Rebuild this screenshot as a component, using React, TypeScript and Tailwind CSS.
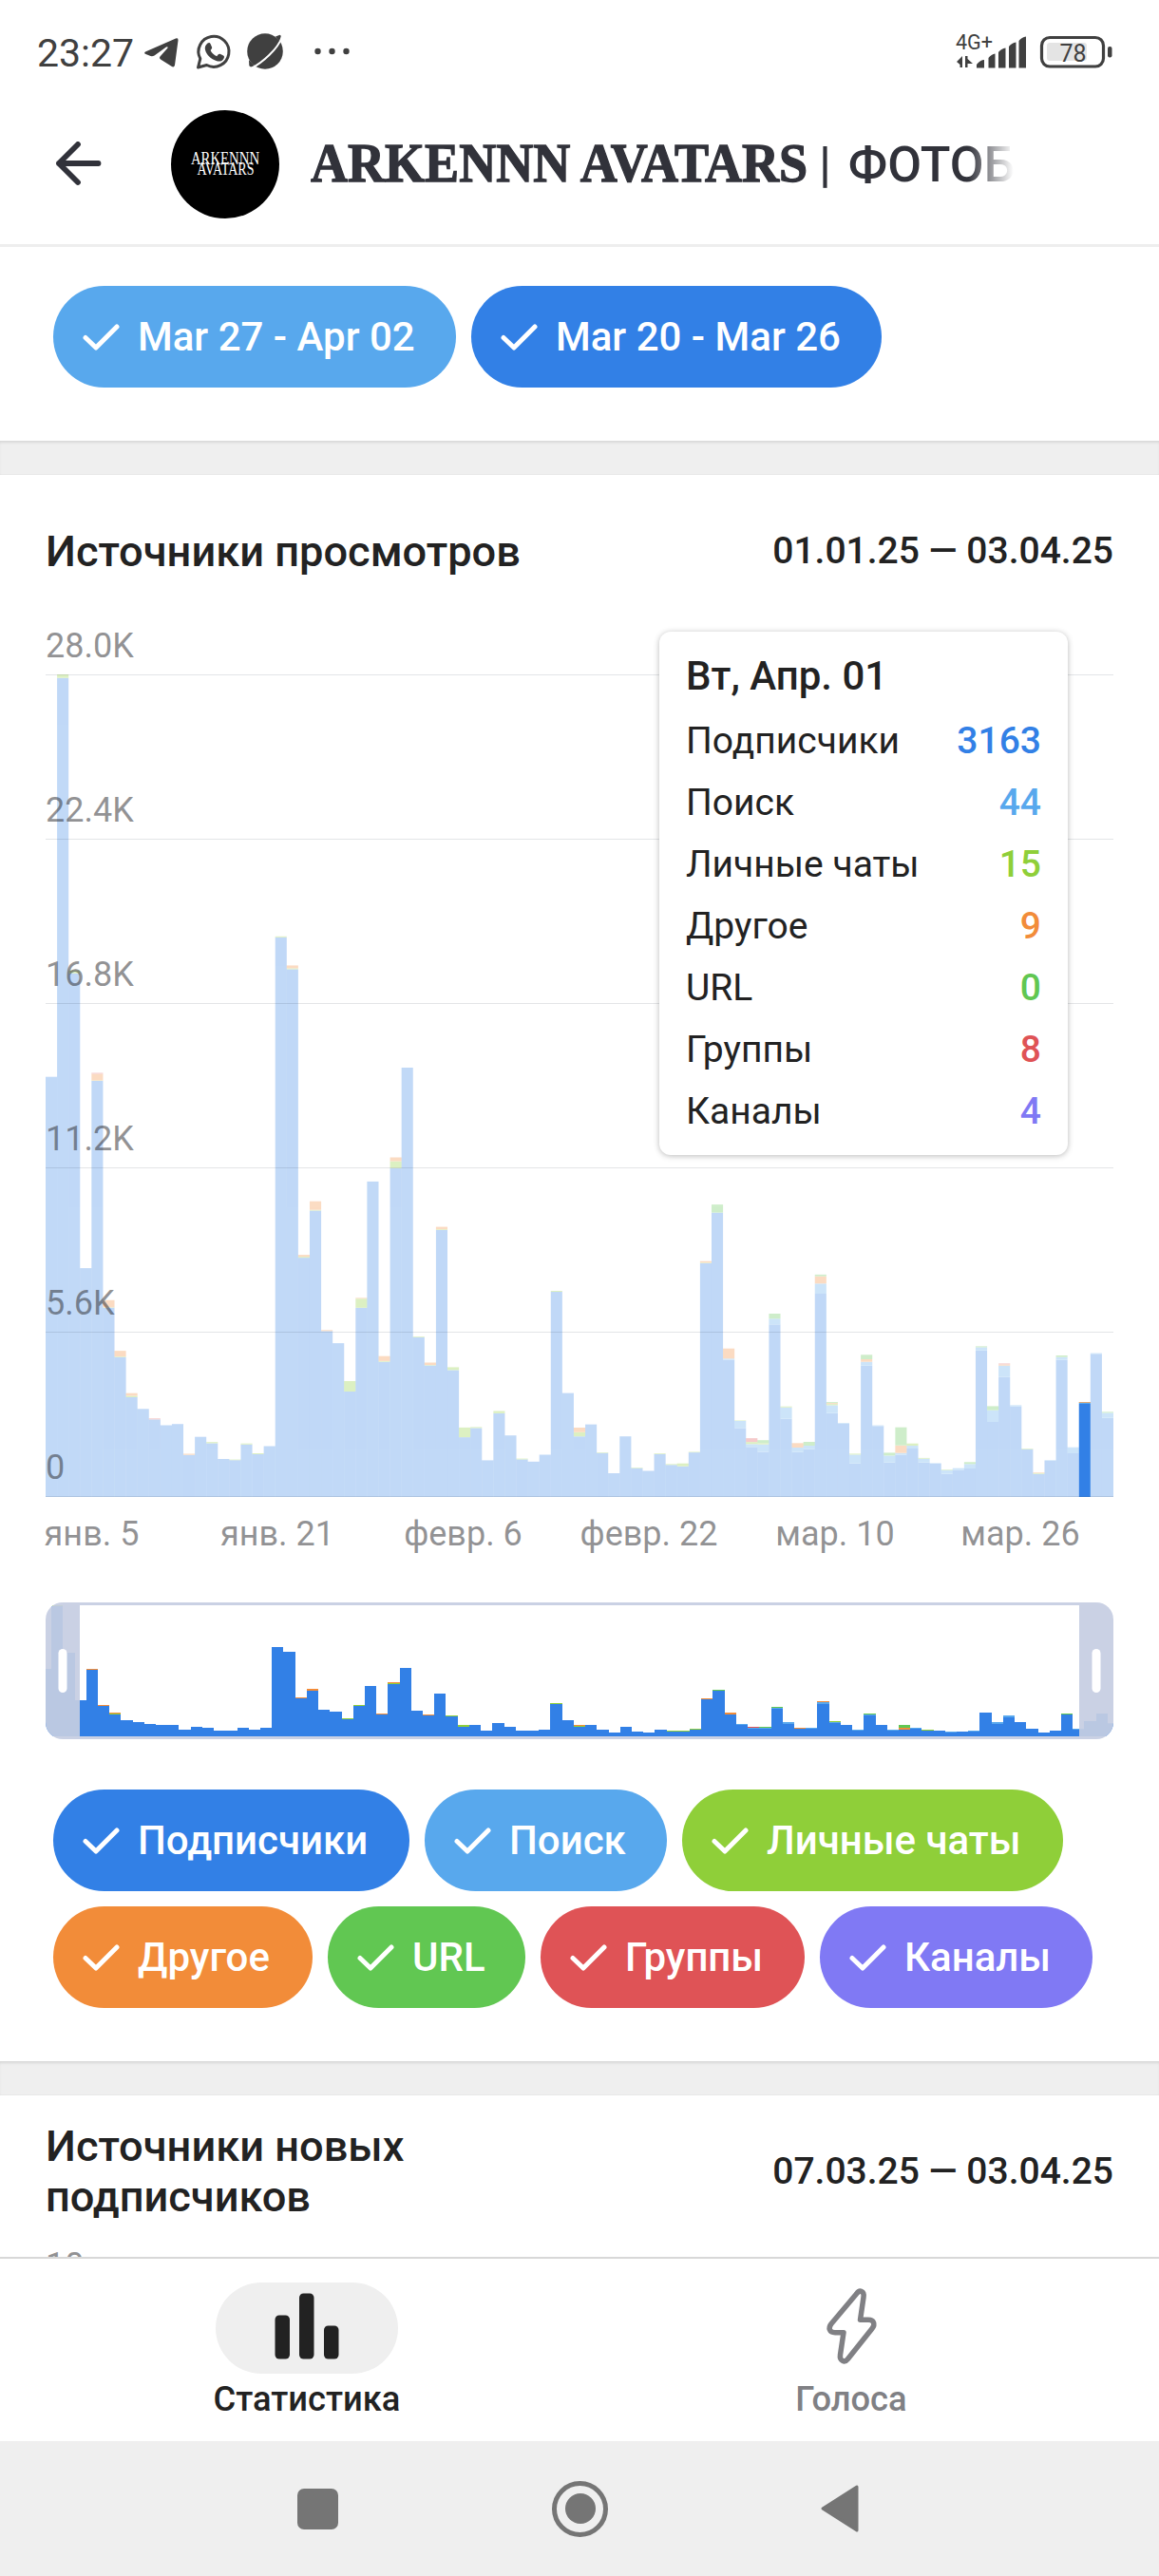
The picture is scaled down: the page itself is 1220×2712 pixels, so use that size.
import type { ReactNode } from "react";

const SERIES = ["#3280e6", "#58a8ed", "#8fcf39", "#f28c39", "#61c752", "#df5356"];

// Daily stack heights: [subscribers, search, private chats, other, url, groups]
const DAYS: number[][] = [
  [442.3], [862.3, 0, 3.7], [551.3, 0, 3], [240.9], [438, 0, 0.5, 7, 0, 1],
  [199.2, 0, 0.5, 7.5], [147.2, 0, 0.7, 6], [105, 0, 1.5, 2.8], [92.7], [81.7, 0, 0, 0, 0, 1],
  [75.5], [76.8], [44.3, 0, 0, 1.2], [63.3], [56.6, 0, 1.2],
  [40], [38.8, 0, 0.6], [55.3, 0, 1], [45, 0, 1], [53.5],
  [589.2, 0, 1], [555.6, 0, 1, 3], [251.9, 0, 1, 2], [301.5, 0, 0.8, 9], [174.7, 0, 0, 1],
  [161.9], [111, 0, 11], [199.2, 0, 9.6, 0.8], [332.1], [142.3, 0, 0.8, 5.2],
  [346.2, 0, 7.3, 4], [452], [168, 0, 0.8], [138.5, 0, 0.5, 2.5], [281, 0, 0.8, 2.6],
  [133.6, 0, 3], [62.9, 0, 10.2], [72.6, 0, 1], [38.6], [88.1, 0, 2.4],
  [64.8], [39.6, 0, 0.8], [37.2], [44.5], [216, 0, 1],
  [109.4], [63.8, 0, 4.4, 4.8], [76.4], [46.4, 0, 0.6], [25],
  [63.8], [30.4, 0, 0.6], [27.5], [45, 0, 0.8], [33.8, 0, 0.8],
  [32.3, 0, 3], [46.9, 0, 0.6], [246.1, 0, 0.6, 1.6], [299.4, 0, 0, 0, 8.5], [144.3, 1.4, 0, 10.6],
  [72.6, 7.5, 0.5], [52.7, 3, 2.2, 0, 0, 4], [47.4, 8, 1.4, 0, 3], [181.7, 6, 0, 0, 5.3], [82.3, 12, 1],
  [47.3, 4.7, 0, 4.7], [50.3, 3.7, 0, 0, 4], [214, 10.7, 0, 7.7, 1.7], [88.3, 8.3, 1.3, 1, 1], [77.3, 0.7],
  [35.3, 9.3, 1], [138.3, 4, 0, 2.7, 4.7], [74.7, 0.7], [36.3, 7.3, 0, 0, 3], [44.3, 2, 0, 8, 19],
  [51, 3, 2.3], [36.3, 4, 0.8], [35, 0.6], [24.3, 4, 0.6], [28.3, 2],
  [30, 4.7, 0, 0, 2], [154.3, 3.3, 0, 0, 1], [79, 12.3, 0, 0, 4.3], [126.3, 12, 0, 1.3, 0, 1], [95.3, 1.3],
  [50.3, 0, 0.7], [24.3, 0, 0.8, 0.7], [38, 0.7], [144.3, 3, 0, 0, 1.7], [46, 6.3],
  [98, 1, 0.4, 0.3, 0, 0.3], [150.7, 0.7], [83.3, 5.3, 0, 0, 1],
];

const SELECTED = 90;

function Bars({ step, width, base, scale, fade }: { step: number; width: number; base: number; scale: number; fade: boolean }) {
  return (
    <>
      {DAYS.map((day, i) => {
        let top = base;
        const x = fade ? i * step : i * step - width / 2;
        return (
          <g key={i} opacity={fade && i !== SELECTED ? 0.3 : 1}>
            {day.map((value, s) => {
              const h = value * scale;
              top -= h;
              return value > 0 ? (
                <rect key={s} x={x} y={top} width={width} height={h} fill={SERIES[s]} shapeRendering={fade ? undefined : "crispEdges"} />
              ) : null;
            })}
          </g>
        );
      })}
    </>
  );
}

const GRID = [
  ["28.0K", 10.5], ["22.4K", 183.5], ["16.8K", 356.5], ["11.2K", 529.5], ["5.6K", 702.5], ["0", 875.5],
] as const;

const DATES = [
  ["янв. 5", 96.5], ["янв. 21", 292], ["февр. 6", 487.5], ["февр. 22", 683], ["мар. 10", 879], ["мар. 26", 1074],
] as const;

function ViewsChart() {
  return (
    <svg width="1220" height="980" viewBox="0 -40 1220 980" className="block">
      <g transform="translate(48 0)">
        <Bars step={12.086} width={12.086} base={876} scale={1} fade />
      </g>
      {GRID.map(([label, y]) => (
        <g key={label}>
          <rect x="48" y={y - 0.5} width="1124" height="1" fill="#182d3b" fillOpacity="0.12" />
          <text x="48" y={y - 18.5} fontSize="36" fill="#252529" fillOpacity="0.5">{label}</text>
        </g>
      ))}
      {DATES.map(([label, x]) => (
        <text key={label} x={x} y="927" fontSize="36" textAnchor="middle" fill="#252529" fillOpacity="0.5">{label}</text>
      ))}
    </svg>
  );
}

function RangeSelector() {
  return (
    <svg width="1124" height="144" viewBox="0 0 1124 144" className="block">
      <defs>
        <clipPath id="range-clip"><rect width="1124" height="144" rx="18" /></clipPath>
      </defs>
      <g clipPath="url(#range-clip)">
        <Bars step={12.217} width={12.217} base={141} scale={0.1594} fade={false} />
        <g fill="#c6cde2" fillOpacity="0.927">
          <rect width="36" height="144" />
          <rect x="1088" width="36" height="144" />
        </g>
        <rect x="36" width="1052" height="3" fill="#cad1e4" />
        <rect x="36" y="141" width="1052" height="3" fill="#cad1e4" />
      </g>
      <rect x="13.5" y="49" width="9" height="46" rx="4.5" fill="#fff" />
      <rect x="1101.5" y="49" width="9" height="46" rx="4.5" fill="#fff" />
    </svg>
  );
}

function Chip({ className, children }: { className: string; children: ReactNode }) {
  return (
    <div className={`flex h-[107px] items-center rounded-full pl-[31px] text-[42px] font-medium text-white ${className}`}>
      <svg width="40" height="30" viewBox="0 0 40 30" className="mr-[18px] shrink-0" fill="none" stroke="currentColor" strokeWidth="5" strokeLinecap="round" strokeLinejoin="round">
        <path d="M3 15.5 14 26 36 4" />
      </svg>
      <span className="whitespace-nowrap">{children}</span>
    </div>
  );
}

const TOOLTIP = [
  ["Подписчики", "3163", "text-[#3280e6]"],
  ["Поиск", "44", "text-[#58a8ed]"],
  ["Личные чаты", "15", "text-[#8fcf39]"],
  ["Другое", "9", "text-[#f28c39]"],
  ["URL", "0", "text-[#61c752]"],
  ["Группы", "8", "text-[#df5356]"],
  ["Каналы", "4", "text-[#8079f4]"],
];

function Tooltip() {
  return (
    <div className="absolute left-[694px] top-[165px] h-[551px] w-[430px] rounded-[12px] bg-white px-7 pt-[18px] shadow-[0_1px_6px_rgba(0,0,0,0.28)]">
      <div className="flex h-[56px] items-center text-[42px] font-medium">Вт, Апр. 01</div>
      <div className="pt-[9px]">
        {TOOLTIP.map(([name, value, color]) => (
          <div key={name} className="flex h-[65px] items-center justify-between text-[39px]">
            <span>{name}</span>
            <span className={`font-medium ${color}`}>{value}</span>
          </div>
        ))}
      </div>
    </div>
  );
}

function StatusBar() {
  return (
    <div className="flex h-[108px] shrink-0 items-center justify-between pl-[39px] pr-[48px] text-[#404040]">
      <div className="flex items-center">
        <span className="w-[111px] pt-[5px] text-[41px] leading-none">23:27</span>
        <svg width="230" height="44" viewBox="0 0 230 44" fill="currentColor">
          <path d="M3 22.500 35 8.500Q37.800 7.600 37.500 10.500L34 36.500Q33.300 39.500 30.500 37.800L19 30.500Q17 29 18.500 27.500L26.500 18.500Q27 16.500 25 17.500L12.500 26.500Q10.500 27.500 8.500 27L3.500 25Q1 24 3 22.500Z" />
          <path d="M58.500 39 60.800 29.800A16 16 0 1 1 67.500 36.500Z" fill="none" stroke="currentColor" strokeWidth="3" strokeLinejoin="round" />
          <path d="M68.500 13.500c1.200-1 2.500-.8 3.100.7l1.400 3.300c.4 1 .1 1.700-1.400 3.500 1.300 2.800 3.300 4.700 6.600 6.200 1.700-2.200 2.300-2.800 3.400-2.400l3.500 1.700c1 .5 1.100 1.200.7 2.400-1 3-4.200 4.400-7.600 3.300-6.500-2-10.800-6.600-12.200-11.700-.8-2.900.4-5.300 2.500-7z" />
          <g transform="translate(109 2)">
            <circle cx="20" cy="20" r="18.800" />
            <path d="M3 29 3.300 35Q4 37.500 9 35.500ZM31 4.500 35.500 2.800Q38 3 35.500 10Z" />
            <path d="M5.500 38C17 32 33.500 18 38 4.500" fill="none" stroke="#fff" strokeWidth="2" />
          </g>
          <circle cx="184.500" cy="22" r="3.200" /><circle cx="199.500" cy="22" r="3.200" /><circle cx="214.500" cy="22" r="3.200" />
        </svg>
      </div>
      <svg width="166" height="40" viewBox="0 0 166 40" className="mt-[2px] overflow-visible" fill="currentColor">
        <text x="0" y="17" fontSize="21.500" textLength="39" lengthAdjust="spacingAndGlyphs">4G+</text>
        <path d="M1 30 7 24V36H4.500V33zM10 24h2.500v3l5.500 5h-5.500v4H10z" />
        <path d="M22 36.500v-3.500q4-5 8-5v8.500zM34.500 36.500V26q3-4 7-4.500v15zM45 36.500V20q3-4 7.500-4.500v21zM56 36.500V14q3-4 7.500-4.500v27zM66.500 36.500V8q3-4 7.500-4.500v33z" />
        <rect x="90.500" y="4.500" width="65" height="30.500" rx="8.500" fill="none" stroke="currentColor" strokeWidth="3.200" />
        <rect x="96" y="10" width="42" height="19" rx="3" fill="#e4e4e4" />
        <rect x="160" y="14" width="4.500" height="11.500" rx="2" />
        <text x="123.500" y="29.500" fontSize="25" textAnchor="middle">78</text>
      </svg>
    </div>
  );
}

function ChatHeader() {
  return (
    <header className="flex h-[152px] shrink-0 items-center border-b-[3px] border-[#eeeeee] pb-[19px] pl-[57px] text-[#31323a]">
      <svg width="52" height="48" viewBox="0 0 52 48" fill="none" stroke="currentColor" strokeWidth="5.800" strokeLinecap="round" strokeLinejoin="round">
        <path d="M46.500 23H5M25 3 5 23 25 43" />
      </svg>
      <div className="ml-[71px] flex size-[114px] flex-col items-center justify-center rounded-full bg-black font-['Liberation_Serif',serif] text-[18px] leading-[11.500px] text-white">
        <span className="scale-x-[.82]">ARKENNN</span>
        <span className="scale-x-[.78]">AVATARS</span>
      </div>
      <h1 className="relative ml-[33px] flex w-[740px] items-baseline overflow-hidden whitespace-nowrap text-[52px] leading-[70px]">
        <span className="w-[524px] origin-left scale-x-[.94] font-['Liberation_Serif',serif] text-[57.500px] font-bold [-webkit-text-stroke:1.300px_#31323a]">ARKENNN AVATARS</span>
        <span className="ml-[11px] font-medium [word-spacing:5px]">| ФОТОБ</span>
        <span className="absolute inset-y-0 right-0 w-[48px] bg-gradient-to-r from-transparent to-white" />
      </h1>
    </header>
  );
}

function SectionTitle({ title, range }: { title: ReactNode; range: string }) {
  return (
    <div className="flex h-auto items-center justify-between px-12 font-medium">
      <h2 className="text-[45.200px] leading-[53px]">{title}</h2>
      <span className="text-[39px] leading-[60px]">{range}</span>
    </div>
  );
}

function Divider() {
  return <div className="h-9 shrink-0 bg-[#efefef] shadow-[inset_0_3px_3px_-1px_rgba(0,0,0,0.10),inset_0_-1px_1px_rgba(0,0,0,0.03)]" />;
}

export default function App() {
  return (
    <div className="flex h-[2712px] w-[1220px] flex-col overflow-hidden bg-white font-['Roboto',sans-serif] text-[#222222]">
      <StatusBar />
      <ChatHeader />

      <section className="flex h-[204px] shrink-0 gap-4 pl-14 pt-[41px]">
        <Chip className="w-[424px] bg-[#58a8ed]">Mar 27 - Apr 02</Chip>
        <Chip className="w-[432px] bg-[#3280e6]">Mar 20 - Mar 26</Chip>
      </section>
      <Divider />

      <section className="relative flex h-[1670px] shrink-0 flex-col">
        <div className="h-[160px] pt-[50px]">
          <SectionTitle title="Источники просмотров" range="01.01.25 — 03.04.25" />
        </div>
        <div className="h-[1027px]">
          <ViewsChart />
        </div>
        <Tooltip />
        <div className="px-12">
          <RangeSelector />
        </div>
        <div className="mt-[53px] flex flex-col gap-4 pl-14">
          <div className="flex gap-4">
            <Chip className="w-[375px] bg-[#3280e6]">Подписчики</Chip>
            <Chip className="w-[255px] bg-[#58a8ed]">Поиск</Chip>
            <Chip className="w-[401px] bg-[#8fcf39]">Личные чаты</Chip>
          </div>
          <div className="flex gap-4">
            <Chip className="w-[273px] bg-[#f28c39]">Другое</Chip>
            <Chip className="w-[208px] bg-[#61c752]">URL</Chip>
            <Chip className="w-[278px] bg-[#df5356]">Группы</Chip>
            <Chip className="w-[287px] bg-[#8079f4]">Каналы</Chip>
          </div>
        </div>
      </section>
      <Divider />

      <section className="h-[170px] shrink-0 overflow-hidden pt-[27px]">
        <SectionTitle title={<>Источники новых<br />подписчиков</>} range="07.03.25 — 03.04.25" />
        <div className="pl-12 pt-[25px] text-[36px] leading-[42px] text-[#929294]">10</div>
      </section>

      <nav className="flex h-[194px] shrink-0 border-t-2 border-[#d8d8d8] pt-[25px] text-[36.300px] font-medium">
        <div className="flex w-[646px] flex-col items-center">
          <div className="flex h-24 w-48 items-center justify-center rounded-full bg-[#efefef]">
            <svg width="68" height="70" viewBox="0 0 68 70" className="-mt-1" fill="currentColor">
              <rect x="0.500" y="23.500" width="15.500" height="46" rx="4.500" />
              <rect x="26" y="0.500" width="15.500" height="69" rx="4.500" />
              <rect x="52" y="34.500" width="15.500" height="35" rx="4.500" />
            </svg>
          </div>
          <span className="mt-1.5 leading-[42px]">Статистика</span>
        </div>
        <div className="flex w-[500px] flex-col items-center text-[#808084]">
          <div className="flex h-24 items-center">
            <svg width="56" height="84" viewBox="0 0 56 84" className="overflow-visible" fill="none" stroke="currentColor" strokeWidth="5.500" strokeLinejoin="round">
              <path d="M33.500 6 7 37.500C3.500 42 5 46.700 11 46.700H20L16.500 70C15.500 76.500 21 79 24.500 74.500L50 42.500C53.500 38 52 33.300 46 33.300H37.500L41 9.500C42 3 37 1 33.500 6Z" />
            </svg>
          </div>
          <span className="mt-1.5 leading-[42px]">Голоса</span>
        </div>
      </nav>

      <div className="flex h-[142px] shrink-0 items-center bg-[#efefef] pl-[313px] text-[#757575]">
        <div className="size-[43px] rounded-[7px] bg-current" />
        <div className="ml-[225px] flex size-[59px] items-center justify-center rounded-full border-[5px] border-current">
          <div className="size-8 rounded-full bg-current" />
        </div>
        <svg width="40" height="50" viewBox="0 0 40 50" className="ml-[224px]" fill="currentColor" stroke="currentColor" strokeWidth="3" strokeLinejoin="round">
          <path d="M2 25 38 2v46z" />
        </svg>
      </div>
    </div>
  );
}
